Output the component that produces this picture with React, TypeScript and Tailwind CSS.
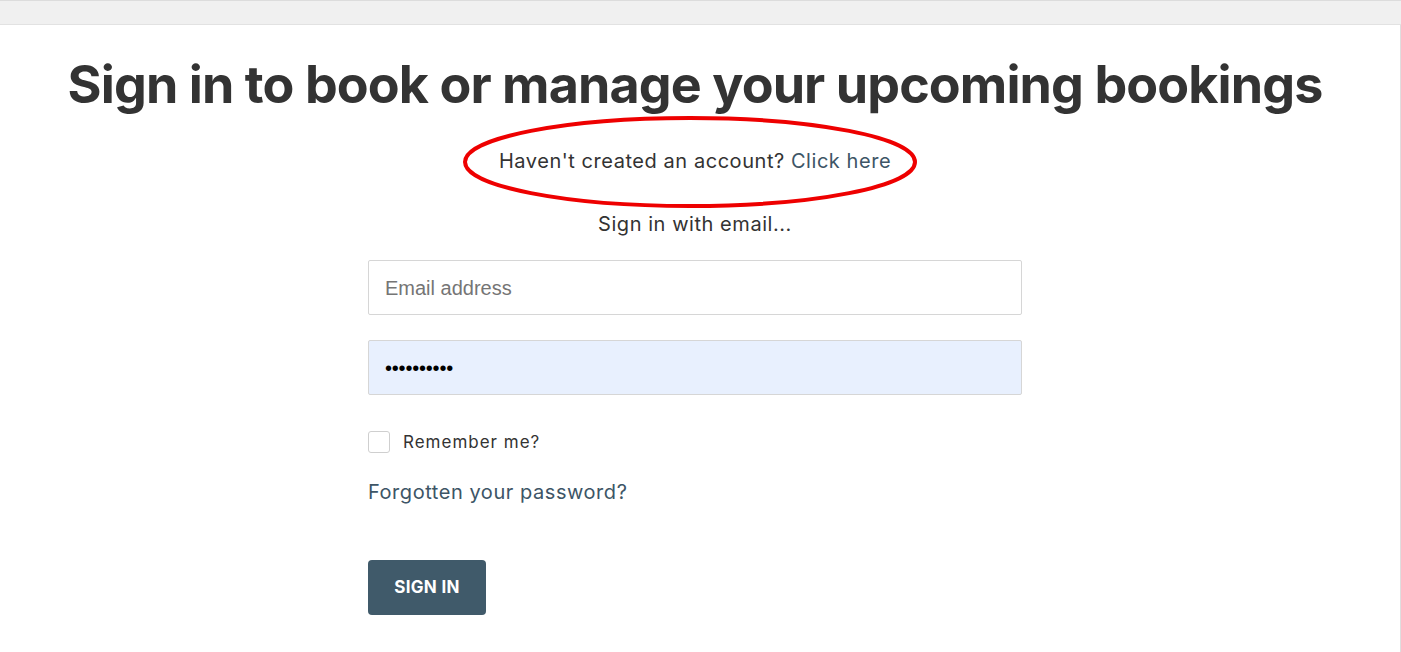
import React from "react";

const sans = { fontFamily: "Inter, 'Noto Sans', sans-serif" };
const arial = { fontFamily: "'Liberation Sans', Arial, sans-serif" };

export default function App() {
  return (
    <div className="min-h-[652px] w-[1401px] bg-white text-[#333]" style={sans}>
      <div className="h-[25px] border-t border-t-[#dcdcdc] border-b border-b-[#e2e2e2] bg-[#f0f0f0]" />
      <div className="relative flex min-h-[627px] flex-col items-center border-r border-r-[#dedede] pr-[10px]">
        <h1 className="mt-[28px] text-[52px] font-bold leading-[64px] tracking-[-0.9px] text-[#333]">
          Sign in to book or manage your upcoming bookings
        </h1>
        <p className="mt-[30px] text-[20px] leading-[28px] tracking-[0.55px] text-[#333]">
          Haven't created an account? <a className="text-[#3d5566]">Click here</a>
        </p>
        <svg className="pointer-events-none absolute left-[461px] top-[90px]" width="458" height="96" viewBox="0 0 458 96">
          <ellipse cx="229" cy="47" rx="225" ry="44" fill="none" stroke="#ee0000" strokeWidth="4" />
        </svg>
        <p className="mt-[35px] text-[20px] leading-[28px] tracking-[0.55px]">Sign in with email...</p>
        <div className="mt-[22px] flex w-[654px] flex-col">
          <div className="flex h-[55px] items-center rounded-[2px] border border-[#d6d6d6] bg-white px-[16px]">
            <span className="text-[20px] text-[#757575]" style={arial}>
              Email address
            </span>
          </div>
          <div className="mt-[25px] flex h-[55px] items-center rounded-[2px] border border-[#d6d6d6] bg-[#e8f0fe] px-[16px]">
            <span className="text-[20px] tracking-[-0.2px] text-black" style={arial}>
              ••••••••••
            </span>
          </div>
          <div className="mt-[36px] flex items-center">
            <div className="h-[22px] w-[22px] rounded-[3px] border border-[#cfcfcf] bg-white" />
            <span className="ml-[13px] text-[17px] leading-[22px] tracking-[1px]">Remember me?</span>
          </div>
          <a className="mt-[25px] text-[20px] leading-[28px] tracking-[0.55px] text-[#3d5566]">Forgotten your password?</a>
          <button className="mt-[54px] flex h-[55px] w-[118px] items-center justify-center rounded-[4px] bg-[#405a6a] text-[17px] font-bold tracking-[0.3px] text-white">
            SIGN IN
          </button>
        </div>
      </div>
    </div>
  );
}
